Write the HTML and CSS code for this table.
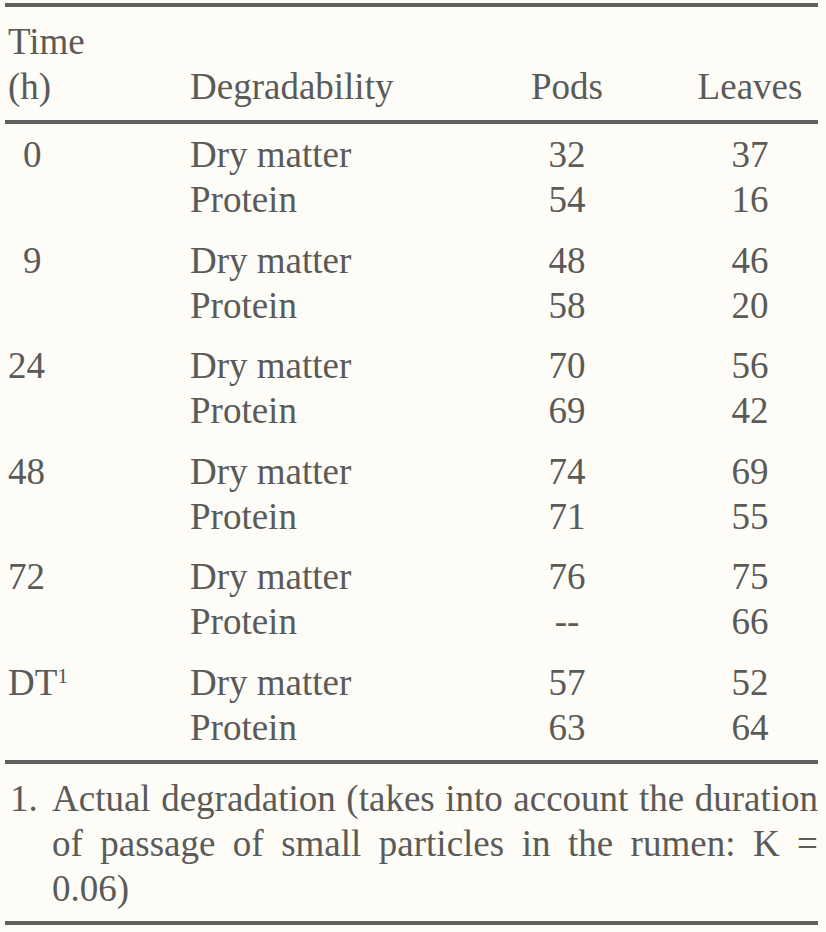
FILE: index.html
```html
<!DOCTYPE html>
<html lang="en">
<head>
<meta charset="utf-8">
<title>Degradability of pods and leaves</title>
<link rel="stylesheet" href="styles.css">
</head>
<body>
<div class="sheet">
  <div class="rule rule-top"></div>
  <div class="row head">
    <div class="c1">Time<br>(h)</div>
    <div class="c2 bottom">Degradability</div>
    <div class="c3 bottom">Pods</div>
    <div class="c4 bottom">Leaves</div>
  </div>
  <div class="rule"></div>
  <div class="body">
    <div class="group">
      <div class="row"><div class="c1 pad">0</div><div class="c2">Dry matter</div><div class="c3">32</div><div class="c4">37</div></div>
      <div class="row"><div class="c1"></div><div class="c2">Protein</div><div class="c3">54</div><div class="c4">16</div></div>
    </div>
    <div class="group">
      <div class="row"><div class="c1 pad">9</div><div class="c2">Dry matter</div><div class="c3">48</div><div class="c4">46</div></div>
      <div class="row"><div class="c1"></div><div class="c2">Protein</div><div class="c3">58</div><div class="c4">20</div></div>
    </div>
    <div class="group">
      <div class="row"><div class="c1">24</div><div class="c2">Dry matter</div><div class="c3">70</div><div class="c4">56</div></div>
      <div class="row"><div class="c1"></div><div class="c2">Protein</div><div class="c3">69</div><div class="c4">42</div></div>
    </div>
    <div class="group">
      <div class="row"><div class="c1">48</div><div class="c2">Dry matter</div><div class="c3">74</div><div class="c4">69</div></div>
      <div class="row"><div class="c1"></div><div class="c2">Protein</div><div class="c3">71</div><div class="c4">55</div></div>
    </div>
    <div class="group">
      <div class="row"><div class="c1">72</div><div class="c2">Dry matter</div><div class="c3">76</div><div class="c4">75</div></div>
      <div class="row"><div class="c1"></div><div class="c2">Protein</div><div class="c3">--</div><div class="c4">66</div></div>
    </div>
    <div class="group">
      <div class="row"><div class="c1">DT<sup>1</sup></div><div class="c2">Dry matter</div><div class="c3">57</div><div class="c4">52</div></div>
      <div class="row"><div class="c1"></div><div class="c2">Protein</div><div class="c3">63</div><div class="c4">64</div></div>
    </div>
  </div>
  <div class="rule"></div>
  <div class="note">
    <div class="num">1.</div>
    <div class="text">Actual degradation (takes into account the duration of passage of small particles in the rumen: K = 0.06)</div>
  </div>
  <div class="rule"></div>
</div>
</body>
</html>
```

FILE: styles.css
```css
html, body {
  margin: 0;
  padding: 0;
  background: #fdfcf7;
}
body {
  font-family: "Liberation Serif", "Times New Roman", serif;
  font-size: 37px;
  line-height: 45px;
  color: #5a5a58;
}
.sheet {
  width: 813px;
  margin-left: 5px;
  padding-top: 3px;
}
.rule {
  height: 4px;
  background: #606060;
}
.row {
  display: grid;
  grid-template-columns: 182px 302px 150px 1fr;
  padding-left: 3px;
}
.head {
  padding-top: 12px;
  padding-bottom: 11px;
}
.bottom {
  align-self: end;
}
.c3 { text-align: center; }
.c4 { text-align: center; padding-left: 40px; }
.pad { padding-left: 15px; }
sup {
  font-size: 22px;
  line-height: 0;
  vertical-align: 12px;
}
.body {
  padding-top: 8px;
  padding-bottom: 10px;
  display: flex;
  flex-direction: column;
  gap: 15.6px;
}
.note {
  display: flex;
  padding: 12px 0 10px 5px;
}
.num {
  width: 42px;
  flex: none;
}
.text {
  flex: 1;
  text-align: justify;
}
```
